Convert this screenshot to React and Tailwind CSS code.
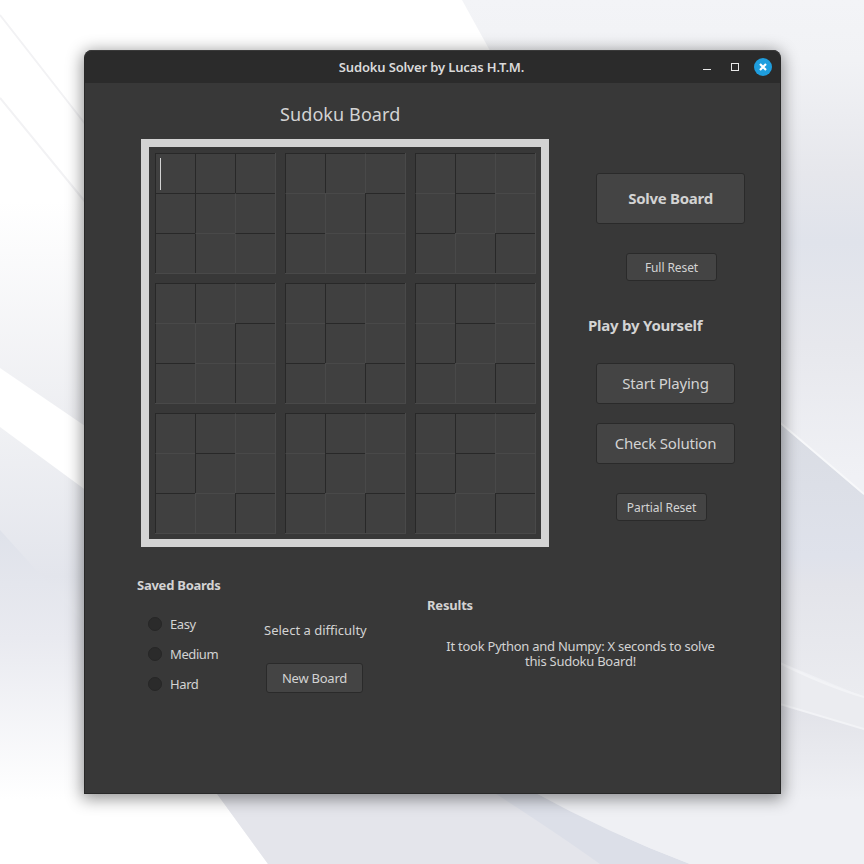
import React from "react";

// "D" = shaded edge, "L" = highlighted edge. Each cell is [top, left].
const COMMON = ["DD", "DD", "DL", "LD", "DD", "LL", "DD", "LL", "DD"];
const BLOCKS = [
  ["DD", "DD", "DD", "DD", "DD", "DL", "DD", "LD", "DL"],
  ["DD", "DD", "DL", "LD", "LL", "DD", "DD", "LL", "LD"],
  COMMON,
  ["DD", "DD", "DL", "LD", "LL", "DD", "DD", "LL", "LD"],
  COMMON,
  COMMON,
  COMMON,
  COMMON,
  COMMON,
];

const EDGES = {
  DD: "border-t-[#282828] border-l-[#282828]",
  DL: "border-t-[#282828] border-l-[#494949]",
  LD: "border-t-[#494949] border-l-[#282828]",
  LL: "border-t-[#494949] border-l-[#494949]",
};

function Block({ cells, focused }) {
  return (
    <div className="grid h-[121px] w-[121px] grid-cols-[40px_40px_40px] grid-rows-[40px_40px_40px] border-r border-b border-[#494949] bg-[#404040]">
      {cells.map((c, i) => (
        <div key={i} className={`border-t border-l pt-1 pl-1 ${EDGES[c]}`}>
          {focused && i === 0 && <div className="h-8 w-px bg-[#d3d3d3]" />}
        </div>
      ))}
    </div>
  );
}

function Button({ className, label, text }) {
  return (
    <button
      className={`flex items-center justify-center rounded-[3px] border border-[#2a2a2a] bg-[#444444] whitespace-nowrap ${className}`}
    >
      <span className={text}>{label}</span>
    </button>
  );
}

function Wallpaper() {
  return (
    <svg className="absolute inset-0" width="864" height="864" viewBox="0 0 864 864">
      <defs>
        <linearGradient id="left" x1="0" y1="0" x2="0" y2="1">
          <stop offset="0" stopColor="#ffffff" />
          <stop offset="0.3" stopColor="#ffffff" />
          <stop offset="1" stopColor="#ebecf0" />
        </linearGradient>
        <linearGradient id="fade" x1="0" y1="0" x2="0" y2="1">
          <stop offset="0" stopColor="#f0f1f4" />
          <stop offset="0.4" stopColor="#e3e5ec" />
          <stop offset="1" stopColor="#ffffff" />
        </linearGradient>
        <linearGradient id="low" x1="0" y1="0" x2="0" y2="1">
          <stop offset="0" stopColor="#dfe2ea" />
          <stop offset="0.4" stopColor="#e9eaf0" />
          <stop offset="1" stopColor="#ffffff" />
        </linearGradient>
        <linearGradient id="right" x1="0" y1="0" x2="0" y2="864" gradientUnits="userSpaceOnUse">
          <stop offset="0" stopColor="#f3f4f7" />
          <stop offset="0.07" stopColor="#f1f2f5" />
          <stop offset="0.2" stopColor="#e6e7ec" />
          <stop offset="0.28" stopColor="#e0e3eb" />
          <stop offset="0.4" stopColor="#e7e8ed" />
          <stop offset="0.55" stopColor="#f0f1f5" />
          <stop offset="1" stopColor="#eff0f4" />
        </linearGradient>
        <linearGradient id="band" x1="0" y1="0" x2="0" y2="1">
          <stop offset="0" stopColor="#d9dce3" />
          <stop offset="0.5" stopColor="#dfe2eb" />
          <stop offset="0.6" stopColor="#e3e4ea" />
          <stop offset="1" stopColor="#ebecf0" />
        </linearGradient>
        <linearGradient id="base" x1="0" y1="0" x2="0" y2="1">
          <stop offset="0" stopColor="#e1e2e8" />
          <stop offset="1" stopColor="#eff0f4" />
        </linearGradient>
      </defs>
      <rect width="864" height="864" fill="#ffffff" />
      <path d="M0 98L110 230V443L0 368Z" fill="url(#left)" />
      <path d="M0 15L100 143M0 98L100 220" stroke="#f2f2f4" strokeWidth="2" />
      <path d="M0 427L110 508V800H0Z" fill="url(#fade)" />
      <path d="M0 530L110 652V800H0Z" fill="url(#low)" />
      <path d="M462 0H864V864H268L200 770H600V250Z" fill="url(#right)" />
      <path d="M217 794L268 864H640L590 780H207Z" fill="#e4e5eb" />
      <path d="M530 790Q610 834 690 864H600Q560 835 490 790Z" fill="#dcdfe8" />
      <path d="M530 790Q610 834 690 864H864V780Z" fill="#eff0f4" />
      <path d="M770 415L864 495V697L770 658Z" fill="url(#band)" />
      <path d="M770 658Q820 684 864 697V729L770 701Z" fill="#ebecf0" />
      <path d="M770 701L864 729V800H770Z" fill="url(#base)" />
      <path d="M770 414L864 494" stroke="#f7f8fa" strokeWidth="2" />
      <path d="M770 658Q820 684 864 697M770 701L864 729" stroke="#f2f3f6" strokeWidth="2" fill="none" />
    </svg>
  );
}

function TitleBar() {
  return (
    <header className="grid h-[33px] grid-cols-[1fr_auto_1fr] items-center rounded-t-[7px] border-t border-[#3a3a3a] bg-[#2b2b2b] pr-2">
      <span />
      <h1 className="pl-[6px] text-[13px] leading-4 font-semibold tracking-[-0.14px] text-[#dadada]">
        Sudoku Solver by Lucas H.T.M.
      </h1>
      <div className="flex items-center justify-end">
        <span className="mt-1 h-px w-2 bg-[#e8e8e8]" />
        <span className="ml-5 size-2 border border-[#e8e8e8]" />
        <span className="ml-[15px] flex size-[18px] items-center justify-center rounded-full bg-[#1f9ede]">
          <svg width="8" height="8" viewBox="0 0 8 8">
            <path d="M1 1L7 7M7 1L1 7" stroke="#fff" strokeWidth="2.2" />
          </svg>
        </span>
      </div>
    </header>
  );
}

function Controls() {
  return (
    <aside className="ml-[39px] flex w-[160px] flex-col pt-[90px]">
      <Button className="ml-2 h-[51px] w-[149px]" label="Solve Board" text="text-[15px] font-bold tracking-[-0.28px]" />
      <Button className="mt-[29px] ml-[38px] h-7 w-[91px] pt-0.5" label="Full Reset" text="text-[12px] tracking-[-0.08px]" />
      <h3 className="mt-[34px] h-5 text-[15px] leading-5 font-bold tracking-[-0.23px] whitespace-nowrap">Play by Yourself</h3>
      <Button className="mt-[28px] ml-2 h-[41px] w-[139px]" label="Start Playing" text="text-[15px] tracking-[-0.2px]" />
      <Button className="mt-[19px] ml-2 h-[41px] w-[139px]" label="Check Solution" text="text-[15px] tracking-[-0.2px]" />
      <Button className="mt-[29px] ml-7 h-7 w-[91px] pt-0.5" label="Partial Reset" text="text-[12px] tracking-[-0.08px]" />
    </aside>
  );
}

const LEVELS = ["Easy", "Medium", "Hard"];

export default function App() {
  return (
    <div className="relative h-[864px] w-[864px] overflow-hidden font-['Noto_Sans',sans-serif] text-[#d3d3d3]">
      <Wallpaper />
      <main className="relative mt-[50px] ml-[84px] h-[744px] w-[697px] rounded-t-lg border-x border-b border-[#282828] bg-[#383838] shadow-[0_3px_16px_2px_rgba(0,0,0,0.42)]">
        <TitleBar />
        <div className="flex pl-14">
          <section className="w-[408px]">
            <h2 className="h-14 pt-[19px] pl-[139px] text-[18px] leading-6 tracking-[0.1px] whitespace-nowrap">Sudoku Board</h2>
            <div className="grid h-[408px] w-[408px] grid-cols-[121px_121px_121px] content-start gap-[9px] border-8 border-[#d3d3d3] px-1.5 pt-1.5">
              {BLOCKS.map((cells, i) => (
                <Block key={i} cells={cells} focused={i === 0} />
              ))}
            </div>
          </section>
          <Controls />
        </div>
        <div className="flex pl-[52px] text-[13px] leading-5 whitespace-nowrap">
          <section className="w-[127px] pt-[28px]">
            <h3 className="font-bold tracking-[-0.25px]">Saved Boards</h3>
            <div className="mt-[19px] flex flex-col gap-2.5 pl-[11px]">
              {LEVELS.map((level) => (
                <label key={level} className="flex h-5 items-center gap-2">
                  <span className="size-[14px] rounded-full border border-[#262626] bg-[#2b2b2b]" />
                  <span className="tracking-[-0.4px]">{level}</span>
                </label>
              ))}
            </div>
          </section>
          <section className="w-[163px] pt-[73px]">
            <p>Select a difficulty</p>
            <Button className="mt-[23px] ml-[2px] h-[30px] w-[97px]" label="New Board" text="tracking-[-0.25px]" />
          </section>
          <section className="w-[307px] pt-[48px]">
            <h3 className="font-bold tracking-[-0.2px]">Results</h3>
            <p className="mt-[24px] text-center leading-[15px] tracking-[-0.25px]">
              It took Python and Numpy: X seconds to solve
              <br />
              this Sudoku Board!
            </p>
          </section>
        </div>
      </main>
    </div>
  );
}
